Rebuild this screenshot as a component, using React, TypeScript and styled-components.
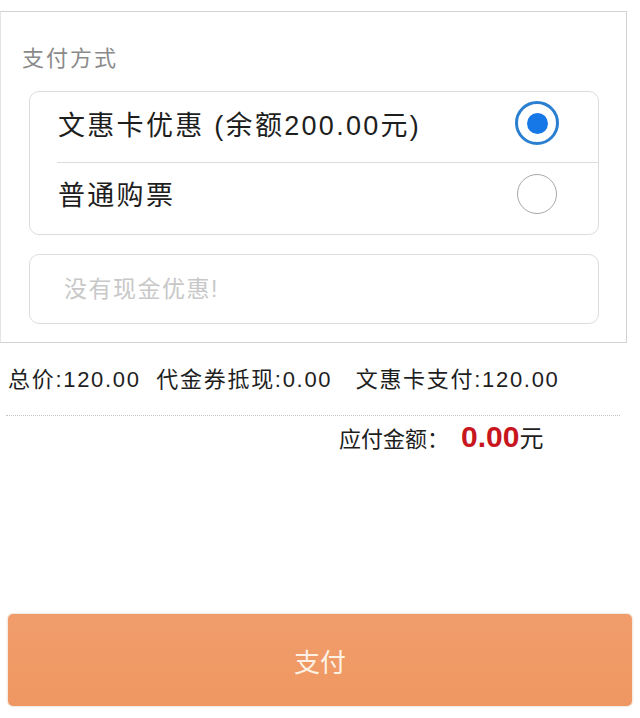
import styled, { createGlobalStyle } from "styled-components";

const GlobalStyle = createGlobalStyle`
  html, body {
    margin: 0;
    padding: 0;
    background: #ffffff;
  }
  body {
    font-family: "Liberation Sans", "Noto Sans CJK SC", sans-serif;
    color: #222;
  }
`;

const Page = styled.div`
  width: 640px;
  height: 718px;
  display: flex;
  flex-direction: column;
  background: #fff;
  overflow: hidden;
`;

const Panel = styled.section`
  margin-top: 11px;
  width: 627px;
  box-sizing: border-box;
  border: 1px solid #d2d2d2;
  border-left-color: #e4e4e4;
  padding: 32px 27px 18px 28px;
  display: flex;
  flex-direction: column;
`;

const PanelTitle = styled.div`
  font-size: 22px;
  line-height: 30px;
  letter-spacing: 2px;
  color: #8a8a8a;
  margin-left: -7px;
  margin-bottom: 17px;
`;

const OptionCard = styled.div`
  border: 1px solid #dcdcdc;
  border-radius: 10px;
  display: flex;
  flex-direction: column;
`;

const OptionRow = styled.label<{ $height: number; $divider?: boolean }>`
  height: ${(p) => p.$height}px;
  box-sizing: border-box;
  display: flex;
  align-items: center;
  justify-content: space-between;
  padding: 0 39px ${(p) => (p.$divider ? 10 : 8)}px 30px;
  margin-left: ${(p) => (p.$divider ? 27 : 0)}px;
  padding-left: ${(p) => (p.$divider ? 1 : 28)}px;
  border-top: ${(p) => (p.$divider ? "1px solid #dcdcdc" : "none")};
  font-size: 27px;
  letter-spacing: 2.3px;
  color: #1e1e1e;
  cursor: pointer;
`;

const Radio = styled.span<{ $checked?: boolean }>`
  flex: none;
  width: ${(p) => (p.$checked ? 44 : 40)}px;
  height: ${(p) => (p.$checked ? 44 : 40)}px;
  margin-right: ${(p) => (p.$checked ? 0 : 2)}px;
  box-sizing: border-box;
  border-radius: 50%;
  border: ${(p) => (p.$checked ? "3px solid #2b7fd0" : "1.5px solid #a8a8a8")};
  display: flex;
  align-items: center;
  justify-content: center;
  background: #fff;
  &::after {
    content: "";
    display: ${(p) => (p.$checked ? "block" : "none")};
    width: 21px;
    height: 21px;
    border-radius: 50%;
    background: #1677e6;
  }
`;

const CashInput = styled.input`
  margin-top: 19px;
  height: 70px;
  box-sizing: border-box;
  border: 1px solid #dcdcdc;
  border-radius: 10px;
  padding: 0 34px;
  font-family: "Liberation Sans", "Noto Sans CJK SC", sans-serif;
  font-size: 23px;
  letter-spacing: 1.5px;
  outline: none;
  &::placeholder {
    color: #c8c8c8;
  }
`;

const Summary = styled.div`
  padding: 22px 8px 0;
  font-size: 22px;
  line-height: 30px;
  letter-spacing: 1.7px;
  color: #1e1e1e;
  white-space: pre;
`;

const Dotted = styled.div`
  margin: 20px 20px 0 6px;
  border-top: 1px dotted #c4c4c4;
`;

const Payable = styled.div`
  padding: 2px 0 0 339px;
  font-size: 22px;
  line-height: 38px;
  color: #1e1e1e;
`;

const Amount = styled.span`
  margin-left: 12px;
  font-size: 30px;
  font-weight: bold;
  color: #c8161e;
`;

const Unit = styled.span`
  font-size: 24px;
`;

const PayButton = styled.button`
  margin: auto 8px 12px;
  height: 92px;
  border: none;
  border-radius: 5px;
  background: linear-gradient(#f19d6b, #ef9762);
  box-shadow: 0 0 2px rgba(160, 100, 60, 0.5);
  color: #fdf1e4;
  font-family: "Liberation Sans", "Noto Sans CJK SC", sans-serif;
  font-size: 26px;
  cursor: pointer;
`;

export default function App() {
  return (
    <Page>
      <GlobalStyle />
      <Panel>
        <PanelTitle>支付方式</PanelTitle>
        <OptionCard>
          <OptionRow $height={70}>
            <span>文惠卡优惠 (余额200.00元)</span>
            <Radio $checked />
          </OptionRow>
          <OptionRow $height={72} $divider>
            <span>普通购票</span>
            <Radio />
          </OptionRow>
        </OptionCard>
        <CashInput placeholder="没有现金优惠!" />
      </Panel>
      <Summary>{"总价:120.00  代金券抵现:0.00   文惠卡支付:120.00"}</Summary>
      <Dotted />
      <Payable>
        应付金额：<Amount>0.00</Amount>
        <Unit>元</Unit>
      </Payable>
      <PayButton>支付</PayButton>
    </Page>
  );
}
